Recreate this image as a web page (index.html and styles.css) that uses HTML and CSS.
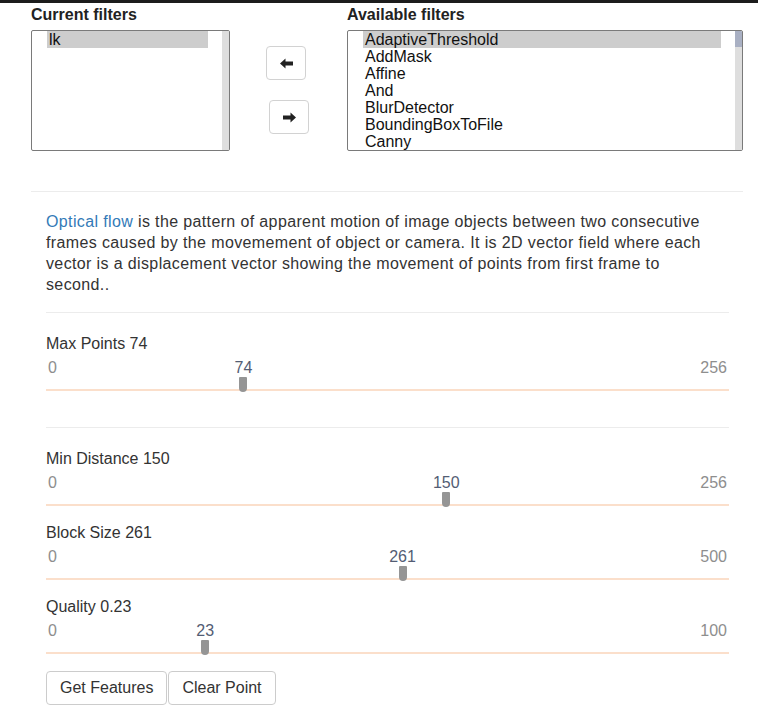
FILE: index.html
```
<!DOCTYPE html>
<html>

<head>
    <meta charset="utf-8" />
    <title>Optical flow</title>
    <meta name="viewport" content="width=device-width, initial-scale=1">
    <link rel="stylesheet" href="styles.css">
</head>

<body>
    <div class="wrap">
        <div class="filters">
            <div class="filter-col">
                <div class="filter-label">Current filters</div>
                <div class="listbox">
                    <div class="list">
                        <div class="option selected">lk</div>
                    </div>
                    <div class="scrollbar"></div>
                </div>
            </div>
            <div class="move-buttons">
                <button class="move-btn move-left">
                    <svg width="13" height="11" viewBox="0 0 13 11"><path d="M0 5.5 L5.5 0.5 L5.5 3.6 L13 3.6 L13 7.4 L5.5 7.4 L5.5 10.5 Z" fill="#222"/></svg>
                </button>
                <button class="move-btn move-right">
                    <svg width="13" height="11" viewBox="0 0 13 11"><path d="M13 5.5 L7.5 0.5 L7.5 3.6 L0 3.6 L0 7.4 L7.5 7.4 L7.5 10.5 Z" fill="#222"/></svg>
                </button>
            </div>
            <div class="filter-col">
                <div class="filter-label">Available filters</div>
                <div class="listbox">
                    <div class="list">
                        <div class="option selected">AdaptiveThreshold</div>
                        <div class="option">AddMask</div>
                        <div class="option">Affine</div>
                        <div class="option">And</div>
                        <div class="option">BlurDetector</div>
                        <div class="option">BoundingBoxToFile</div>
                        <div class="option">Canny</div>
                    </div>
                    <div class="scrollbar">
                        <div class="thumb"></div>
                    </div>
                </div>
            </div>
        </div>

        <hr class="rule">

        <div class="panel">
            <p class="desc">
                <a href="#" class="link">Optical flow</a> is the pattern of apparent motion of image objects between two consecutive<br>
                frames caused by the movemement of object or camera. It is 2D vector field where each<br>
                vector is a displacement vector showing the movement of points from first frame to<br>
                second..
            </p>

            <hr class="rule inner-rule">

            <div class="param first">
                <div class="param-label">Max Points 74</div>
                <div class="slider">
                    <div class="slider-values">
                        <span>0</span>
                        <span>256</span>
                    </div>
                    <div class="slider-track"></div>
                    <span class="slider-current" style="left: 28.9%">74</span>
                    <span class="slider-handle" style="left: 28.9%"></span>
                </div>
            </div>

            <hr class="rule inner-rule second-rule">

            <div class="param">
                <div class="param-label">Min Distance 150</div>
                <div class="slider">
                    <div class="slider-values">
                        <span>0</span>
                        <span>256</span>
                    </div>
                    <div class="slider-track"></div>
                    <span class="slider-current" style="left: 58.6%">150</span>
                    <span class="slider-handle" style="left: 58.6%"></span>
                </div>
            </div>

            <div class="param">
                <div class="param-label">Block Size 261</div>
                <div class="slider">
                    <div class="slider-values">
                        <span>0</span>
                        <span>500</span>
                    </div>
                    <div class="slider-track"></div>
                    <span class="slider-current" style="left: 52.2%">261</span>
                    <span class="slider-handle" style="left: 52.2%"></span>
                </div>
            </div>

            <div class="param">
                <div class="param-label">Quality 0.23</div>
                <div class="slider">
                    <div class="slider-values">
                        <span>0</span>
                        <span>100</span>
                    </div>
                    <div class="slider-track"></div>
                    <span class="slider-current" style="left: 23.3%">23</span>
                    <span class="slider-handle" style="left: 23.3%"></span>
                </div>
            </div>

            <div class="actions">
                <button class="btn">Get Features</button>
                <button class="btn">Clear Point</button>
            </div>
        </div>
    </div>
</body>

</html>
```

FILE: styles.css
```
body {
    margin: 0;
    padding: 0;
    border-top: 3px solid #1c1c1c;
    font-family: "Liberation Sans", Arial, sans-serif;
    font-size: 16px;
    color: #333;
    background: #fff;
}

button:focus {
    outline: none;
}

.wrap {
    margin: 0 15px 0 31px;
    padding-top: 2px;
}

.filters {
    display: grid;
    grid-template-columns: 199px 117px 396px;
}

.filter-label {
    font-weight: bold;
    color: #222;
    line-height: 20px;
    margin-bottom: 5px;
}

.listbox {
    display: flex;
    height: 119px;
    border: 1px solid #7a7a7a;
    border-radius: 2px;
    overflow: hidden;
}

.list {
    flex: 1;
    padding: 0 14px 0 15px;
}

.option {
    line-height: 17px;
    padding-left: 2px;
    color: #111;
    white-space: nowrap;
}

.option.selected {
    background-color: #cdcdcd;
}

.scrollbar {
    width: 7px;
    background-color: #dedede;
}

.thumb {
    height: 16px;
    background-color: #a9b0c3;
}

.move-buttons {
    display: flex;
    flex-direction: column;
    align-items: flex-start;
    padding: 41px 0 0 36px;
}

.move-btn {
    width: 40px;
    height: 34px;
    padding: 0;
    background: #fff;
    border: 1px solid #d2d2d2;
    border-radius: 4px;
    display: flex;
    align-items: center;
    justify-content: center;
}

.move-right {
    margin: 20px 0 0 3px;
}

.rule {
    border: 0;
    border-top: 1px solid #ececec;
    margin: 40px 0 0 0;
}

.panel {
    padding: 0 14px 0 15px;
}

.desc {
    margin: 19px 0 0 0;
    line-height: 21px;
    letter-spacing: 0.37px;
    white-space: nowrap;
}

.link {
    color: #337ab7;
    text-decoration: none;
}

.inner-rule {
    margin-top: 17px;
}

.second-rule {
    margin-top: 36px;
}

.param {
    margin-top: 16px;
}

.param.first,
.second-rule + .param {
    margin-top: 20px;
}

.param-label {
    line-height: 21px;
    margin-bottom: 4px;
}

.slider {
    position: relative;
}

.slider-values {
    display: flex;
    justify-content: space-between;
    line-height: 20px;
    padding: 0 2px;
    color: #8e8e8e;
}

.slider-track {
    height: 2px;
    margin-top: 11px;
    background-color: #fbdfcb;
}

.slider-current {
    position: absolute;
    top: 0;
    line-height: 20px;
    color: #535d74;
    transform: translateX(-50%);
}

.slider-handle {
    position: absolute;
    top: 19px;
    width: 8px;
    height: 15px;
    background-color: #959595;
    border-radius: 1px 1px 4px 4px;
    transform: translateX(-50%);
}

.actions {
    display: flex;
    margin-top: 17px;
}

.btn {
    font-family: inherit;
    font-size: 16px;
    line-height: 20px;
    color: #333;
    padding: 6px 13px;
    background: #fff;
    border: 1px solid #ccc;
    border-radius: 4px;
    margin-right: 1px;
}
```
